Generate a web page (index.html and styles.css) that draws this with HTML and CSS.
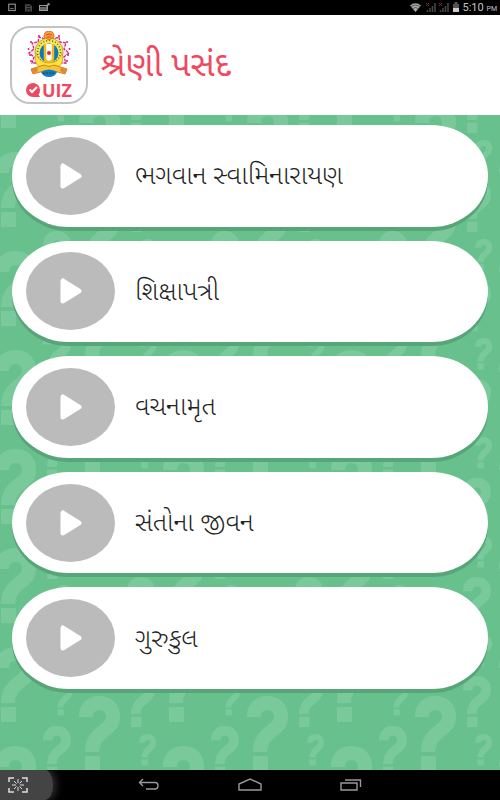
FILE: index.html
```html
<!DOCTYPE html>
<html lang="gu">
<head>
<meta charset="utf-8">
<meta name="viewport" content="width=device-width, initial-scale=1">
<title>શ્રેણી પસંદ</title>
<link rel="stylesheet" href="styles.css">
</head>
<body>
<svg class="defs" aria-hidden="true">
  <symbol id="play" viewBox="0 0 24 28"><path d="M4 4V24L20 14Z" fill="#fff" stroke="#fff" stroke-width="5" stroke-linejoin="round"/></symbol>
</svg>
<div class="status">
  <svg width="42" height="9" viewBox="0 0 42 9" aria-hidden="true">
    <rect x=".7" y="1.200" width="6.600" height="6.300" fill="none" stroke="#888" stroke-width="1.200"/><path d="M2 6L3 4.500L4 5.500L5 5L6 6Z" fill="#888"/>
    <path d="M17 1H22L24 3V8.500H17Z" fill="#484848"/><path d="M19 1V3.500H22V1M19 8.500V5.500H22V8.500" fill="none" stroke="#171717"/>
    <rect x="31.500" y="2.500" width="8" height="5" fill="#666" stroke="#999"/><path d="M32 3.500H38" stroke="#111"/><circle cx="40.500" cy="1.200" r="1.200" fill="#999"/>
  </svg>
  <div class="status-right">
    <svg width="50" height="11" viewBox="0 0 50 11" aria-hidden="true">
      <path d="M0 3.500Q5.500 -1 11 3.500L5.500 10Z" fill="#aaa"/><path d="M1 4.500Q5.500 1.500 10 4.500M3 6.500Q5.500 4.500 8 6.500" fill="none" stroke="#333" stroke-width=".7"/>
      <path d="M17.500 8V10M20 6V10M22.500 4V10M25 1V10M30.500 8V10M33 6V10M35.500 4V10M38 1V10" stroke="#444" stroke-width="1.600"/>
      <path d="M16 1L19 4M19 1L16 4M29 1L32 4M32 1L29 4" stroke="#a11d1d"/>
      <path d="M43 2H44.500V0H47.500V2H49V10H43Z" fill="#555"/><path d="M43 6H49V10H43Z" fill="#ccc"/>
    </svg>
    <span class="clock">5:10 <small>PM</small></span>
  </div>
</div>
<header class="header">
  <div class="logo">
    <svg class="emblem" viewBox="0 0 44 46" aria-hidden="true">
      <g fill="#e5215a"><circle cx="4" cy="11" r="1"/><circle cx="1.500" cy="18" r="1"/><circle cx="3" cy="24" r="1"/><circle cx="4" cy="30" r="1"/><circle cx="40" cy="11" r="1"/><circle cx="42.500" cy="18" r="1"/><circle cx="41" cy="24" r="1"/><circle cx="40" cy="30" r="1"/><circle cx="12" cy="5" r="1"/><circle cx="32" cy="5" r="1"/></g>
      <path d="M22 4L26 8L32 6L33 11L39 12L37 18L42 22L37 26L39 32L33 32L30 37H14L11 32L5 32L7 26L2 22L7 18L5 12L11 11L12 6L18 8Z" fill="#f9e7ef" stroke="#c32a83" stroke-width="1.300" stroke-dasharray="3 1"/>
      <circle cx="22" cy="21" r="14" fill="#f5e957" stroke="#c8a81c"/>
      <circle cx="22" cy="21" r="11.500" fill="none" stroke="#69611d" stroke-width="1.500" stroke-dasharray="1 2"/>
      <circle cx="22" cy="22" r="9.500" fill="#0879bd"/>
      <path d="M18 13V27Q18 31 22 31Q26 31 26 27V13" fill="#fff" stroke="#f3b71f" stroke-width="2.500"/>
      <circle cx="22" cy="22" r="2" fill="#e42534"/>
      <path d="M9 22Q12 32 22 32Q32 32 35 22Q39 38 22 38Q5 38 9 22Z" fill="#ffe53c" stroke="#d99722" stroke-width=".7"/>
      <path d="M4 38L17 34Q22 37 27 34L40 38L38 43L27 40H17L6 43Z" fill="#f5c637" stroke="#bb6c20" stroke-width=".8"/>
      <path d="M4 38L10 36L11 40L6 43ZM40 38L34 36L33 40L38 43Z" fill="#e08b2f"/>
      <path d="M14 41Q22 36 30 41Q28 46 22 46Q16 46 14 41Z" fill="#117dbd"/><path d="M16 42H28" stroke="#223f75" stroke-dasharray="2 1"/>
      <path d="M17 6Q17 0 22 0Q27 0 27 6L22 9Z" fill="#f6a62d" stroke="#de6135"/><path d="M19 4Q22 2 25 4M20 6H24" fill="none" stroke="#e33d38"/>
    </svg>
    <div class="quiz">
      <svg width="14" height="14" viewBox="0 0 14 14" role="img" aria-label="Q"><path d="M7 0A7 7 0 0 1 14 7Q14 10 12.500 11.500L14 14H7A7 7 0 0 1 7 0Z" fill="#ee4a5f"/><path d="M3.500 6.500L6 9L11 4" fill="none" stroke="#fff" stroke-width="2.200"/></svg><span>UIZ</span>
    </div>
  </div>
  <h1>શ્રેણી પસંદ</h1>
</header>
<main class="main">
  <svg class="backdrop" aria-hidden="true">
    <defs>
      <g id="mark"><path d="M7 21V20C7 11 13 7 20.500 7C28 7 34 11 34 21C34 36 13 34 13 56" fill="none" stroke="#79c99b" stroke-width="14"/><path d="M6 60H21V75H6Z" fill="#79c99b"/></g>
      <g id="cluster">
        <use href="#mark" transform="translate(79 86)"/>
        <use href="#mark" transform="translate(163 37)"/>
        <use href="#mark" transform="translate(-5 37)"/>
        <use href="#mark" transform="translate(43 17) scale(.68)"/>
        <use href="#mark" transform="translate(127 66) scale(.68)"/>
        <use href="#mark" transform="translate(55 74) scale(.42)"/>
        <use href="#mark" transform="translate(139 25) scale(.42)"/>
      </g>
      <pattern id="marks" width="168" height="99" patternUnits="userSpaceOnUse"><use href="#cluster"/><use href="#cluster" y="-99"/></pattern>
    </defs>
    <rect width="100%" height="100%" fill="url(#marks)"/>
  </svg>
  <button class="row" type="button"><span class="disc"><svg><use href="#play"/></svg></span><span class="label">ભગવાન સ્વામિનારાયણ</span></button>
  <button class="row" type="button"><span class="disc"><svg><use href="#play"/></svg></span><span class="label">શિક્ષાપત્રી</span></button>
  <button class="row" type="button"><span class="disc"><svg><use href="#play"/></svg></span><span class="label">વચનામૃત</span></button>
  <button class="row" type="button"><span class="disc"><svg><use href="#play"/></svg></span><span class="label">સંતોના જીવન</span></button>
  <button class="row" type="button"><span class="disc"><svg><use href="#play"/></svg></span><span class="label">ગુરુકુલ</span></button>
</main>
<nav class="nav">
  <button class="capture" type="button" aria-label="Screenshot"><svg width="20" height="16" viewBox="0 0 20 16" fill="none" stroke="#ddd"><path d="M1 5V1H6M14 1H19V5M1 11V15H6M14 15H19V11" stroke-width="1.500"/><path d="M10 2V6M10 10V14M4 8H8M12 8H16M6 4L8.500 6.500M14 4L11.500 6.500M6 12L8.500 9.500M14 12L11.500 9.500"/></svg></button>
  <button type="button" aria-label="Back"><svg width="22" height="14" viewBox="0 0 22 14" fill="none" stroke="#999" stroke-width="1.400"><path d="M5 1L1.500 4.500L5 8M1.500 4.500H17Q20 4.500 20 7.500Q20 11 17 11H8"/></svg></button>
  <button type="button" aria-label="Home"><svg width="24" height="14" viewBox="0 0 24 14" fill="none" stroke="#999" stroke-width="1.400"><path d="M1 12V6L12 1L23 6V12Z"/></svg></button>
  <button type="button" aria-label="Recent apps"><svg width="22" height="14" viewBox="0 0 22 14" fill="none" stroke="#999" stroke-width="1.400"><path d="M1 5H17V12H1ZM5 2H20.500V9"/></svg></button>
  <span></span>
</nav>
</body>
</html>
```
FILE: styles.css
```css
* { box-sizing: border-box; }
body {
  margin: 0;
  min-height: 100vh;
  display: flex;
  flex-direction: column;
  background: #fff;
  font-family: "Noto Sans Gujarati", "Noto Sans", sans-serif;
}
button { border: 0; padding: 0; background: none; font: inherit; color: inherit; }
svg { display: block; flex: none; }
.defs { position: absolute; width: 0; height: 0; }
.status {
  height: 15px;
  padding: 0 3px 0 8px;
  display: flex;
  align-items: center;
  justify-content: space-between;
  background: #000;
}
.status-right { display: flex; align-items: center; gap: 3px; }
.clock { padding-top: 2px; font: 11px/15px Roboto, sans-serif; color: #c4c4c4; white-space: nowrap; }
.clock small { font-size: 7px; }
.header {
  height: 100px;
  padding: 0 10px;
  display: flex;
  align-items: center;
  gap: 13px;
}
.logo {
  width: 78px;
  height: 78px;
  border: 2px solid #c2c3c5;
  border-radius: 20px;
  display: flex;
  flex-direction: column;
  align-items: center;
  gap: 4px;
  padding-top: 3px;
}
.emblem { width: 44px; height: 46px; }
.quiz {
  display: flex;
  align-items: center;
  gap: 2px;
  color: #ee4a5f;
  font: 700 18px/18px "Open Sans", sans-serif;
}
h1 { margin: 0; padding-top: 5px; color: #ee4a5f; font-size: 34px; line-height: 44px; font-weight: 400; }
.main {
  flex: 1;
  position: relative;
  padding: 10px 12px 81px;
  display: flex;
  flex-direction: column;
  gap: 14px;
  background: #68c18d;
}
.backdrop { position: absolute; inset: 0; width: 100%; height: 100%; }
.row {
  flex: 1;
  position: relative;
  display: flex;
  align-items: center;
  gap: 20px;
  padding: 0 14px;
  border-radius: 57px / 50%;
  background: #fff;
  box-shadow: 0 4px 0 #58a578;
  color: #222;
  font-size: 26px;
  line-height: 32px;
  font-weight: 300;
  text-align: left;
}
.label { padding-top: 5px; }
.disc {
  flex: none;
  width: 89px;
  height: 78px;
  border-radius: 50%;
  display: grid;
  place-items: center;
  background: #bbb;
}
.disc svg { width: 24px; height: 28px; }
.nav {
  height: 30px;
  display: grid;
  grid-template-columns: 98px 1fr 1fr 1fr 98px;
  background: #000;
}
.nav button { display: grid; place-items: center; }
.nav .capture {
  width: 53px;
  justify-items: start;
  padding-left: 8px;
  background: #444;
  border-radius: 0 8px 8px 0 / 0 15px 15px 0;
  box-shadow: 3px 0 8px #333;
  clip-path: inset(0 -14px 0 0);
}
```
